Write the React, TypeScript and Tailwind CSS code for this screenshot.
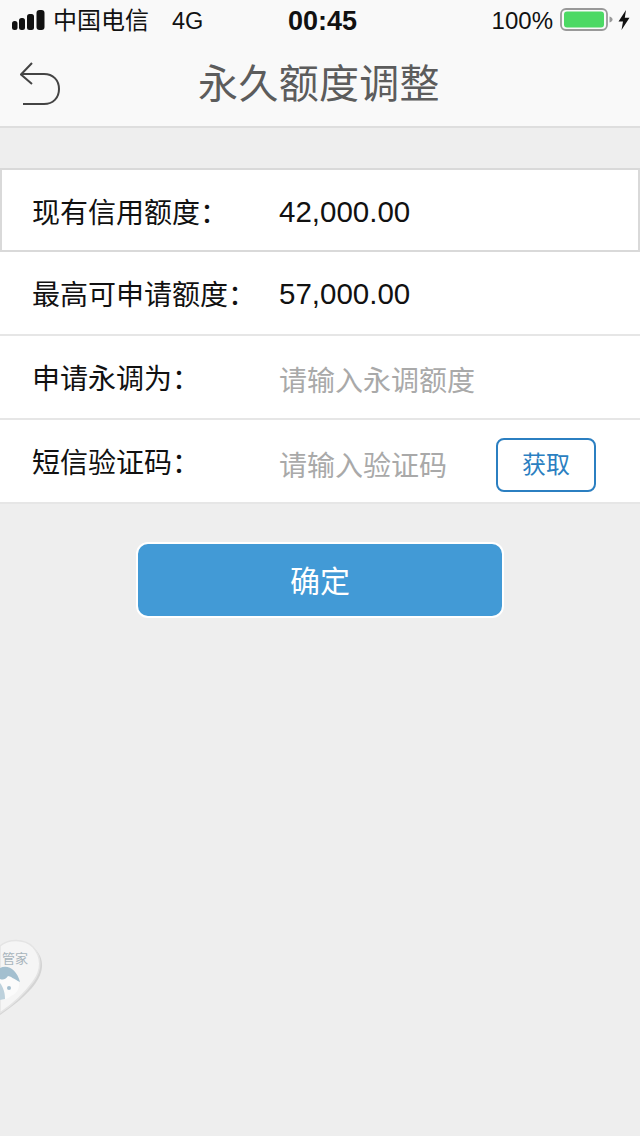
const cjk = "font-['Liberation_Sans','Noto_Sans_CJK_SC',sans-serif]";

function Signal() {
  return (
    <svg width="33" height="20" viewBox="0 0 33 20" className="block">
      <rect x="0" y="11" width="5.500" height="9" rx="2.500" fill="#111" />
      <rect x="7" y="8" width="6" height="12" rx="2.500" fill="#111" />
      <rect x="15" y="4" width="7" height="16" rx="2.500" fill="#111" />
      <rect x="24.500" y="0" width="8" height="20" rx="3" fill="#111" />
    </svg>
  );
}

function Battery() {
  return (
    <svg width="54" height="24" viewBox="0 0 54 24" className="block">
      <rect x="1" y="1" width="46" height="21" rx="5" fill="none" stroke="#999" strokeWidth="1.800" />
      <rect x="4" y="3.500" width="40" height="16" rx="3" fill="#4cd964" />
      <path d="M49.500 8.500c2 .5 3 1.600 3 3s-1 2.500-3 3z" fill="#999" />
    </svg>
  );
}

function Bolt() {
  return (
    <svg width="12" height="20" viewBox="0 0 12 20" className="block">
      <path d="M8 0 L0.500 11.500 L5 11.500 L3.500 20 L11.500 7.800 L6.800 7.800 Z" fill="#111" />
    </svg>
  );
}

function Back() {
  return (
    <svg width="42" height="44" viewBox="0 0 42 44" fill="none" stroke="#444" strokeWidth="2" className="block">
      <path d="M12 1 L1 12.500 L12 22" />
      <path d="M1 12 H24 C33 12 39 18 39 27 C39 36 33 42 24 42 H3" />
    </svg>
  );
}

function Widget() {
  return (
    <div className="absolute left-0 top-[936px] w-[50px] h-[86px] overflow-hidden">
      <svg width="50" height="86" viewBox="0 0 50 86" className="absolute left-0 top-0">
        <path d="M0 11 C8 4 25 3 35 13 C45 23 44 36 35 48 C27 59 12 71 0 79 Z" fill="#d4d4d4" />
        <path d="M0 10 C8 3 24 2 33 11 C42 21 42 34 33 46 C25 57 12 69 0 77 Z" fill="#f5f5f5" stroke="#e4e4e4" strokeWidth="1.500" />
        <path d="M0 33 C8 29 17 35 19 46 C20 53 16 58 11 60 C7 63 4 64 0 64 Z" fill="#fbfbfb" />
        <path d="M0 32 C8 28 17 34 20 46 C14 43 10 40 8 40 C5 44 3 44 0 43 Z" fill="#a3bfcf" />
        <circle cx="9" cy="52" r="2" fill="#a3bfcf" />
        <path d="M0 47 C3 51 5 56 5 63 L0 64 Z" fill="#bdd1dc" />
      </svg>
      <span className={`absolute left-[2px] top-[15px] text-[13px] leading-[16px] text-[#a8b4bc] whitespace-nowrap ${cjk}`}>管家</span>
    </div>
  );
}

function Row({ label, children, className = "", labelClass = "pl-[33px]" }: { label: string; children: React.ReactNode; className?: string; labelClass?: string }) {
  return (
    <div className={`flex items-center bg-white h-[84px] ${className}`}>
      <div className={`w-[279px] shrink-0 mt-[6px] text-[28px] leading-[40px] text-[#111] whitespace-nowrap ${labelClass}`}>{label}</div>
      {children}
    </div>
  );
}

export default function App() {
  return (
    <div className={`relative w-[640px] h-[1136px] overflow-hidden bg-[#eeeeee] ${cjk}`}>
      <div className="h-[128px] bg-[#f9f9f9] border-b-2 border-[#dedede]">
        <div className="h-[40px] flex items-center pl-[12px] pr-[10px] text-[#111]">
          <div className="w-[200px] flex items-center">
            <Signal />
            <span className="ml-[8px] mt-[2px] text-[24px] leading-[30px]">中国电信</span>
            <span className="ml-[23px] mt-[2px] text-[23.500px] leading-[30px]">4G</span>
          </div>
          <div className="flex-1 text-center mt-[2px] pl-[3px] text-[27px] font-bold leading-[30px]">00:45</div>
          <div className="flex items-center justify-end w-[200px]">
            <span className="text-[24px] leading-[30px] mt-[1px]">100%</span>
            <div className="ml-[7px]"><Battery /></div>
            <div className="ml-[4px]"><Bolt /></div>
          </div>
        </div>
        <div className="relative h-[86px] flex items-center justify-center">
          <div className="absolute left-[20px] top-[22px]"><Back /></div>
          <span className="text-[40px] leading-[50px] text-[#5c5c5c] mt-[2px] mr-[2px] tracking-[0.3px]">永久额度调整</span>
        </div>
      </div>

      <div className="mt-[40px]">
        <Row label="现有信用额度：" className="border-2 border-[#d9d9d9]" labelClass="pl-[30px] !w-[277px] !mt-[8px]">
          <span className="text-[29.500px] leading-[40px] text-[#111] mt-[4px]">42,000.00</span>
        </Row>
        <Row label="最高可申请额度：" className="border-b-2 border-[#e6e6e6]" labelClass="pl-[32px]">
          <span className="text-[29.500px] leading-[40px] text-[#111] mt-[2px]">57,000.00</span>
        </Row>
        <Row label="申请永调为：" className="border-b-2 border-[#e6e6e6]" labelClass="pl-[32px]">
          <span className="text-[28px] leading-[40px] text-[#a9a9a9] mt-[9px]">请输入永调额度</span>
        </Row>
        <Row label="短信验证码：" className="border-b-2 border-[#e6e6e6]" labelClass="pl-[32px]">
          <span className="w-[217px] text-[28px] leading-[40px] text-[#a9a9a9] mt-[11px]">请输入验证码</span>
          <button className="w-[100px] h-[54px] rounded-[8px] border-2 border-[#2b7fc1] bg-white text-[24px] text-[#2b7fc1] mt-[7px]">获取</button>
        </Row>
      </div>

      <div className="mt-[38px] flex justify-center">
        <button className="w-[368px] h-[76px] rounded-[12px] border-2 border-white bg-[#429ad6] pt-[3px] text-[30px] text-white">确定</button>
      </div>

      <Widget />
    </div>
  );
}
